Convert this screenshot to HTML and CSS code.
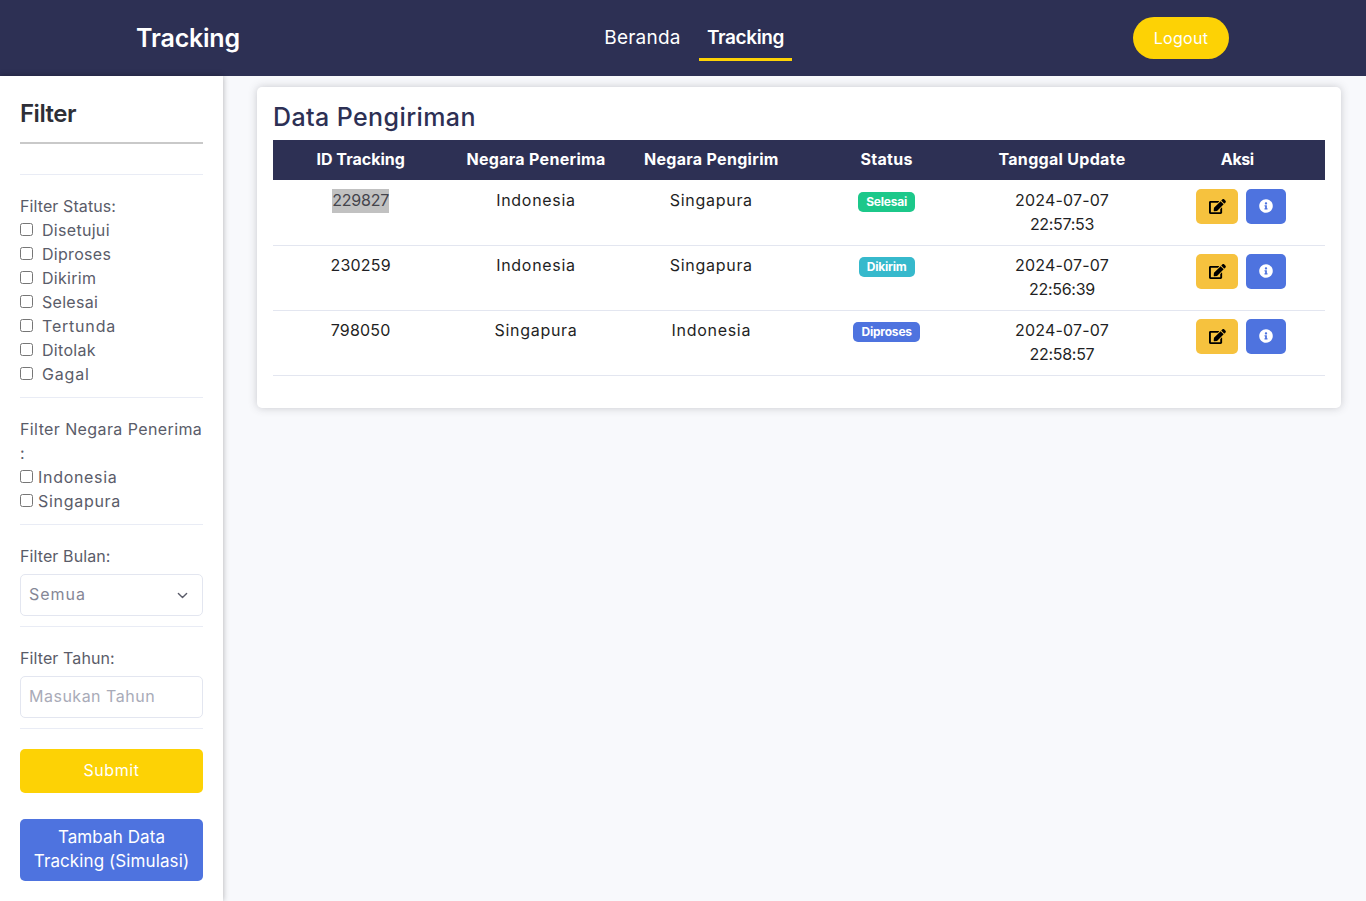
FILE: index.html
```html
<!DOCTYPE html>
<html lang="id">
<head>
<meta charset="UTF-8">
<meta name="viewport" content="width=device-width, initial-scale=1.0">
<title>Tracking</title>
<link rel="stylesheet" href="styles.css">
</head>
<body>
    <header class="navbar">
        <div class="brand">Tracking</div>
        <nav class="nav-links">
            <a class="nav-link" href="#">Beranda</a>
            <a class="nav-link active" href="#">Tracking</a>
        </nav>
        <div class="nav-end"><button class="logout">Logout</button></div>
    </header>

    <div class="layout">
        <aside class="sidebar">
            <h2 class="filter-title">Filter</h2>
            <hr class="title-line">
            <hr class="first-line">

            <div class="filter-label">Filter Status:</div>
            <label class="check"><input type="checkbox"><span>Disetujui</span></label>
            <label class="check"><input type="checkbox"><span>Diproses</span></label>
            <label class="check"><input type="checkbox"><span>Dikirim</span></label>
            <label class="check"><input type="checkbox"><span>Selesai</span></label>
            <label class="check wide"><input type="checkbox"><span>Tertunda</span></label>
            <label class="check"><input type="checkbox"><span>Ditolak</span></label>
            <label class="check wide"><input type="checkbox"><span>Gagal</span></label>
            <hr>

            <div class="filter-label long">Filter Negara Penerima :</div>
            <label class="check tight"><input type="checkbox"><span>Indonesia</span></label>
            <label class="check tight"><input type="checkbox"><span>Singapura</span></label>
            <hr>

            <div class="filter-label">Filter Bulan:</div>
            <select class="field select-field"><option>Semua</option></select>
            <hr>

            <div class="filter-label">Filter Tahun:</div>
            <input class="field" type="text" placeholder="Masukan Tahun">
            <hr>

            <button class="btn-submit">Submit</button>
            <button class="btn-add">Tambah Data Tracking (Simulasi)</button>
        </aside>

        <main class="content">
            <section class="card">
                <h1 class="card-title">Data Pengiriman</h1>
                <table class="tracking-table">
                    <thead>
                        <tr>
                            <th>ID Tracking</th>
                            <th>Negara Penerima</th>
                            <th>Negara Pengirim</th>
                            <th>Status</th>
                            <th>Tanggal Update</th>
                            <th>Aksi</th>
                        </tr>
                    </thead>
                    <tbody>
                        <tr>
                            <td><span class="picked">229827</span></td>
                            <td class="country">Indonesia</td>
                            <td class="country">Singapura</td>
                            <td><span class="badge green">Selesai</span></td>
                            <td>2024-07-07<br><span class="time">22:57:53</span></td>
                            <td class="actions">
                                <button class="icon-btn edit"><svg viewBox="0 0 576 512"><path d="M402.6 83.2l90.2 90.2c3.8 3.8 3.8 10 0 13.8L274.4 405.6l-92.8 10.3c-12.4 1.4-22.9-9.1-21.5-21.5l10.3-92.8L388.8 83.2c3.8-3.8 10-3.8 13.8 0zm162-22.9l-48.8-48.8c-15.2-15.2-39.9-15.2-55.2 0l-35.4 35.4c-3.8 3.8-3.8 10 0 13.8l90.2 90.2c3.8 3.8 10 3.8 13.8 0l35.4-35.4c15.2-15.3 15.2-40 0-55.2zM384 346.2V448H64V128h229.8c3.2 0 6.2-1.3 8.5-3.5l40-40c7.6-7.6 2.2-20.5-8.5-20.5H48C21.5 64 0 85.5 0 112v352c0 26.5 21.5 48 48 48h352c26.5 0 48-21.5 48-48V306.2c0-10.7-12.9-16-20.5-8.5l-40 40c-2.2 2.3-3.5 5.3-3.5 8.5z"/></svg></button>
                                <button class="icon-btn info"><svg viewBox="0 0 512 512"><path d="M256 8C119 8 8 119.1 8 256c0 137 111 248 248 248s248-111 248-248C504 119.1 393 8 256 8zm0 110c23.2 0 42 18.8 42 42s-18.8 42-42 42-42-18.8-42-42 18.8-42 42-42zm56 254c0 6.6-5.4 12-12 12h-88c-6.6 0-12-5.4-12-12v-24c0-6.6 5.4-12 12-12h12v-64h-12c-6.6 0-12-5.4-12-12v-24c0-6.6 5.4-12 12-12h64c6.6 0 12 5.4 12 12v100h12c6.6 0 12 5.4 12 12v24z"/></svg></button>
                            </td>
                        </tr>
                        <tr>
                            <td>230259</td>
                            <td class="country">Indonesia</td>
                            <td class="country">Singapura</td>
                            <td><span class="badge teal">Dikirim</span></td>
                            <td>2024-07-07<br><span class="time">22:56:39</span></td>
                            <td class="actions">
                                <button class="icon-btn edit"><svg viewBox="0 0 576 512"><path d="M402.6 83.2l90.2 90.2c3.8 3.8 3.8 10 0 13.8L274.4 405.6l-92.8 10.3c-12.4 1.4-22.9-9.1-21.5-21.5l10.3-92.8L388.8 83.2c3.8-3.8 10-3.8 13.8 0zm162-22.9l-48.8-48.8c-15.2-15.2-39.9-15.2-55.2 0l-35.4 35.4c-3.8 3.8-3.8 10 0 13.8l90.2 90.2c3.8 3.8 10 3.8 13.8 0l35.4-35.4c15.2-15.3 15.2-40 0-55.2zM384 346.2V448H64V128h229.8c3.2 0 6.2-1.3 8.5-3.5l40-40c7.6-7.6 2.2-20.5-8.5-20.5H48C21.5 64 0 85.5 0 112v352c0 26.5 21.5 48 48 48h352c26.5 0 48-21.5 48-48V306.2c0-10.7-12.9-16-20.5-8.5l-40 40c-2.2 2.3-3.5 5.3-3.5 8.5z"/></svg></button>
                                <button class="icon-btn info"><svg viewBox="0 0 512 512"><path d="M256 8C119 8 8 119.1 8 256c0 137 111 248 248 248s248-111 248-248C504 119.1 393 8 256 8zm0 110c23.2 0 42 18.8 42 42s-18.8 42-42 42-42-18.8-42-42 18.8-42 42-42zm56 254c0 6.6-5.4 12-12 12h-88c-6.6 0-12-5.4-12-12v-24c0-6.6 5.4-12 12-12h12v-64h-12c-6.6 0-12-5.4-12-12v-24c0-6.6 5.4-12 12-12h64c6.6 0 12 5.4 12 12v100h12c6.6 0 12 5.4 12 12v24z"/></svg></button>
                            </td>
                        </tr>
                        <tr>
                            <td>798050</td>
                            <td class="country">Singapura</td>
                            <td class="country">Indonesia</td>
                            <td><span class="badge blue">Diproses</span></td>
                            <td>2024-07-07<br><span class="time">22:58:57</span></td>
                            <td class="actions">
                                <button class="icon-btn edit"><svg viewBox="0 0 576 512"><path d="M402.6 83.2l90.2 90.2c3.8 3.8 3.8 10 0 13.8L274.4 405.6l-92.8 10.3c-12.4 1.4-22.9-9.1-21.5-21.5l10.3-92.8L388.8 83.2c3.8-3.8 10-3.8 13.8 0zm162-22.9l-48.8-48.8c-15.2-15.2-39.9-15.2-55.2 0l-35.4 35.4c-3.8 3.8-3.8 10 0 13.8l90.2 90.2c3.8 3.8 10 3.8 13.8 0l35.4-35.4c15.2-15.3 15.2-40 0-55.2zM384 346.2V448H64V128h229.8c3.2 0 6.2-1.3 8.5-3.5l40-40c7.6-7.6 2.2-20.5-8.5-20.5H48C21.5 64 0 85.5 0 112v352c0 26.5 21.5 48 48 48h352c26.5 0 48-21.5 48-48V306.2c0-10.7-12.9-16-20.5-8.5l-40 40c-2.2 2.3-3.5 5.3-3.5 8.5z"/></svg></button>
                                <button class="icon-btn info"><svg viewBox="0 0 512 512"><path d="M256 8C119 8 8 119.1 8 256c0 137 111 248 248 248s248-111 248-248C504 119.1 393 8 256 8zm0 110c23.2 0 42 18.8 42 42s-18.8 42-42 42-42-18.8-42-42 18.8-42 42-42zm56 254c0 6.6-5.4 12-12 12h-88c-6.6 0-12-5.4-12-12v-24c0-6.6 5.4-12 12-12h12v-64h-12c-6.6 0-12-5.4-12-12v-24c0-6.6 5.4-12 12-12h64c6.6 0 12 5.4 12 12v100h12c6.6 0 12 5.4 12 12v24z"/></svg></button>
                            </td>
                        </tr>
                    </tbody>
                </table>
            </section>
        </main>
    </div>
</body>
</html>
```

FILE: styles.css
```css
* {
    box-sizing: border-box;
}
body {
    margin: 0;
    height: 901px;
    overflow: hidden;
    font-family: Inter, "Open Sans", sans-serif;
    font-size: 16px;
    line-height: 24px;
    color: #5a5c69;
    background-color: #f8f9fc;
}

/* top bar */
.navbar {
    display: grid;
    grid-template-columns: 376px 1fr 370px;
    align-items: center;
    height: 76px;
    background-color: #2d3054;
    color: white;
}
.brand {
    text-align: center;
    font-size: 25px;
    font-weight: 600;
    letter-spacing: -0.2px;
}
.nav-links {
    display: flex;
    justify-content: center;
    gap: 10px;
    padding-left: 16px;
}
.nav-link {
    width: 93px;
    padding: 11px 0 8px;
    color: white;
    text-align: center;
    text-decoration: none;
    font-size: 19px;
    letter-spacing: 0.2px;
    border-bottom: 3px solid transparent;
}
.nav-link.active {
    font-weight: 600;
    letter-spacing: -0.4px;
    border-bottom-color: #fdd205;
}
.nav-end {
    text-align: center;
}
.logout {
    width: 96px;
    height: 42px;
    border: none;
    border-radius: 21px;
    background-color: #fdd205;
    color: white;
    font-family: inherit;
    font-size: 16px;
    letter-spacing: 0.3px;
}

.layout {
    display: flex;
    height: 825px;
}

/* left filter column */
.sidebar {
    width: 223px;
    flex-shrink: 0;
    padding: 20px;
    background-color: white;
    box-shadow: 0 0 6px rgba(0, 0, 0, 0.3);
}
.filter-title {
    margin: 0;
    font-size: 24px;
    line-height: 36px;
    font-weight: 600;
    letter-spacing: -0.5px;
    color: #2e2f37;
}
hr {
    margin: 10px 0 20px;
    border: none;
    border-top: 1px solid #e9ecf5;
}
.title-line {
    margin: 10px 0 30px;
    border-top: 2px solid #c9c9c9;
}
.filter-label {
    margin-top: -1px;
    padding-bottom: 1px;
    letter-spacing: 0.1px;
}
.filter-label.long {
    letter-spacing: 0.4px;
}
.check {
    display: flex;
    align-items: center;
    height: 24px;
    letter-spacing: 0.3px;
}
.check span {
    margin-top: -2px;
}
.check input {
    width: 13px;
    height: 13px;
    margin: 0 9px 4px 0;
}
.check.wide {
    letter-spacing: 0.8px;
}
.check.tight {
    letter-spacing: 0.7px;
}
.check.tight input {
    margin-right: 5px;
}
.field {
    display: block;
    width: 100%;
    height: 42px;
    margin-top: 5px;
    padding: 0 8px 2px;
    border: 1px solid #e3e6f0;
    border-radius: 5px;
    background-color: white;
    color: #858796;
    font-family: inherit;
    font-size: 16px;
    letter-spacing: 0.5px;
}
.field::placeholder {
    color: #a9abb8;
}
.select-field {
    appearance: none;
    letter-spacing: 1px;
    background-image: url("data:image/svg+xml,%3Csvg xmlns='http://www.w3.org/2000/svg' viewBox='0 0 16 16'%3E%3Cpath fill='none' stroke='%235a5c69' stroke-linecap='round' stroke-linejoin='round' stroke-width='2' d='M2 5l6 6 6-6'/%3E%3C/svg%3E");
    background-repeat: no-repeat;
    background-position: right 14px center;
    background-size: 11px 11px;
}
.btn-submit,
.btn-add {
    display: block;
    width: 100%;
    border: none;
    border-radius: 5px;
    padding-bottom: 4px;
    color: white;
    font-family: inherit;
    font-size: 16px;
    line-height: 24px;
}
.btn-submit {
    height: 44px;
    background-color: #fdd205;
    letter-spacing: 0.6px;
}
.btn-add {
    height: 62px;
    margin-top: 26px;
    padding-left: 6px;
    padding-right: 6px;
    background-color: #4e73df;
    font-size: 17px;
    letter-spacing: 0.1px;
}

/* main content */
.content {
    flex: 1;
    padding: 11px 25px 0 34px;
}
.card {
    height: 321px;
    padding: 12px 16px 0;
    border-radius: 5px;
    background-color: white;
    box-shadow: 0 0 8px rgba(58, 59, 69, 0.25);
}
.card-title {
    margin: 0;
    height: 41px;
    font-size: 25px;
    line-height: 36px;
    font-weight: 500;
    letter-spacing: 0.4px;
    color: #2d3054;
}
.tracking-table {
    width: 100%;
    table-layout: fixed;
    border-collapse: separate;
    border-spacing: 0;
    text-align: center;
}
.tracking-table th {
    height: 40px;
    padding: 0 0 2px;
    background-color: #2d3054;
    color: white;
    font-size: 16px;
    font-weight: 700;
    letter-spacing: 0.3px;
}
.tracking-table th:first-child {
    letter-spacing: 0;
}
.tracking-table th:last-child {
    letter-spacing: -0.4px;
}
.tracking-table td {
    height: 65px;
    padding: 7px 0;
    vertical-align: top;
    color: #1f1f24;
    border-bottom: 1px solid #e3e6f0;
    letter-spacing: 0.2px;
}
.tracking-table tbody tr:first-child td {
    height: 66px;
    padding-top: 8px;
}
.tracking-table td.country {
    letter-spacing: 0.7px;
}
.time {
    letter-spacing: -0.3px;
}
.picked {
    display: inline-block;
    height: 24px;
    margin-top: 1px;
    line-height: 22px;
    letter-spacing: -0.2px;
    background-color: #c1c1c1;
    color: #44444c;
}
.badge {
    display: inline-block;
    padding: 0 8px;
    margin-top: 4px;
    border-radius: 5px;
    color: white;
    font-size: 12px;
    line-height: 20px;
    font-weight: 700;
    letter-spacing: -0.2px;
    vertical-align: top;
}
.badge.green { background-color: #1cc88a; }
.badge.teal { background-color: #36b9cc; }
.badge.blue { background-color: #4e73df; }
.tracking-table td.actions {
    padding: 8px 0 0 8px;
    font-size: 0;
}
.tracking-table tbody tr:first-child td.actions {
    padding-top: 9px;
}
.icon-btn {
    display: inline-flex;
    align-items: center;
    justify-content: center;
    height: 35px;
    padding: 0 0 1px;
    border: none;
    border-radius: 5px;
    vertical-align: top;
}
.icon-btn svg {
    height: 14px;
}
.icon-btn.edit {
    width: 42px;
    margin-right: 8px;
    background-color: #f6c23e;
}
.icon-btn.edit svg {
    height: 15px;
    fill: black;
}
.icon-btn.info {
    width: 40px;
    background-color: #4e73df;
}
.icon-btn.info svg {
    fill: white;
}
```
